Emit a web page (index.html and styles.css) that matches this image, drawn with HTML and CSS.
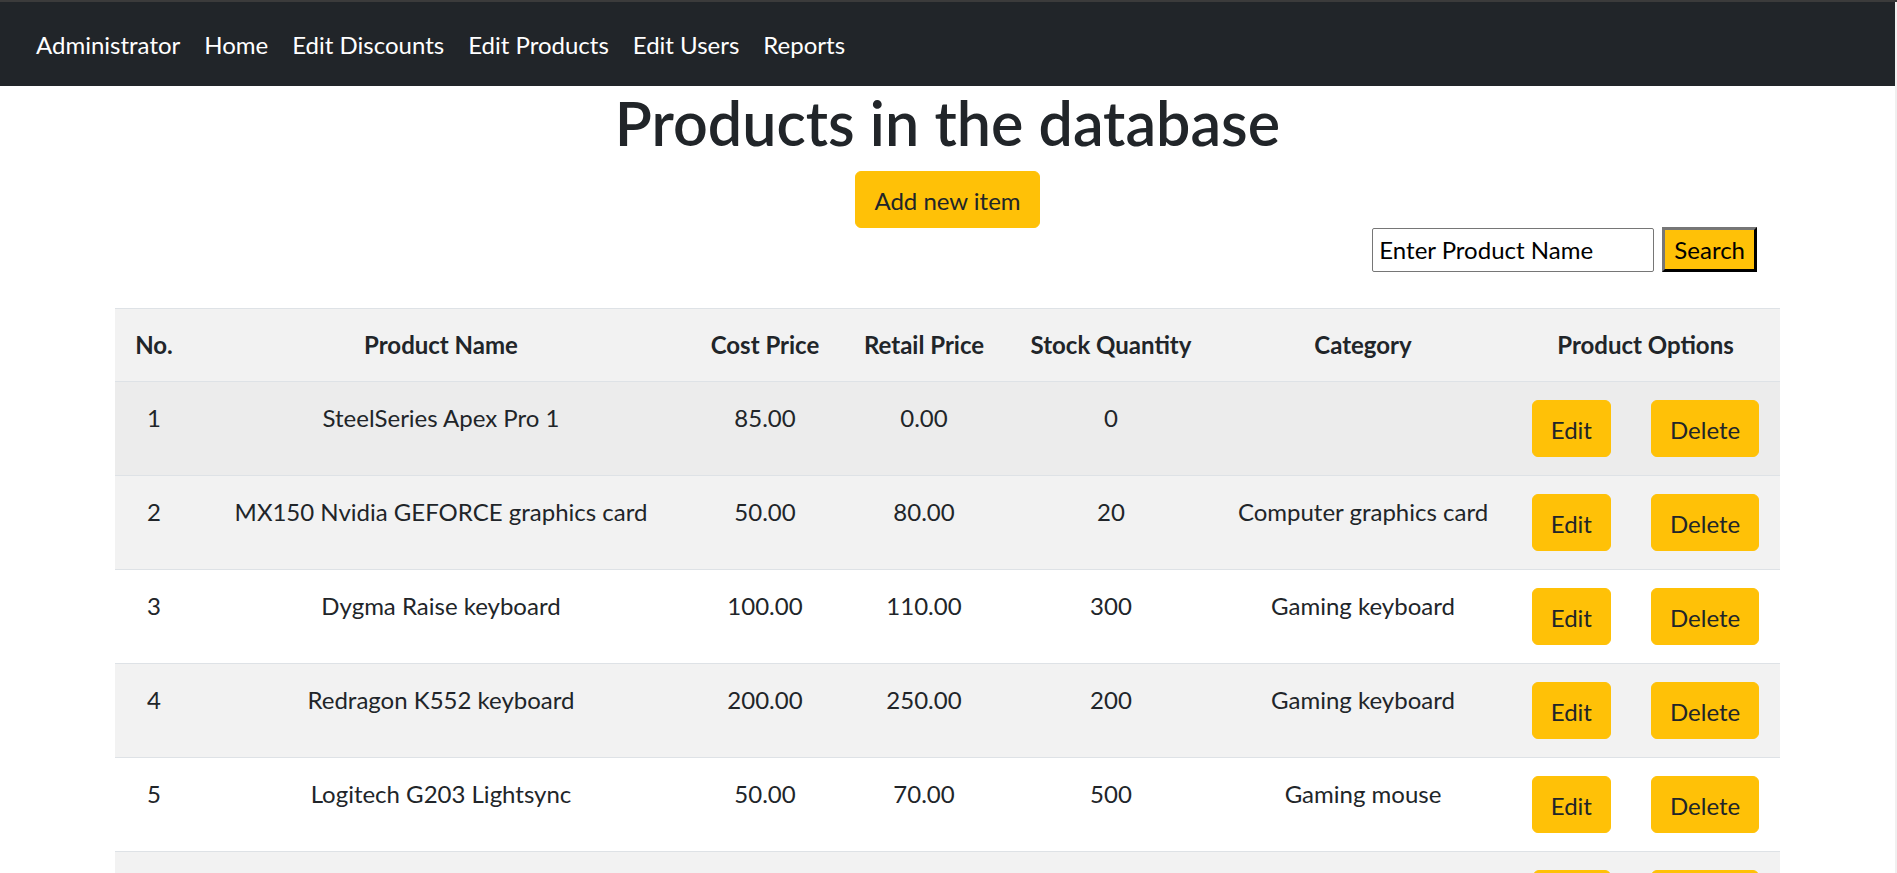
FILE: index.html
```html
<!DOCTYPE html>
<html lang="en">
<head>
<meta charset="utf-8">
<title>Products in the database</title>
<link rel="stylesheet" href="styles.css">
</head>
<body>
<nav class="navbar">
  <a class="nav-link" href="#">Administrator</a>
  <a class="nav-link" href="#">Home</a>
  <a class="nav-link" href="#">Edit Discounts</a>
  <a class="nav-link" href="#">Edit Products</a>
  <a class="nav-link" href="#">Edit Users</a>
  <a class="nav-link" href="#">Reports</a>
</nav>
<main class="page">
  <h1 class="title">Products in the database</h1>
  <div class="add-wrap"><button class="btn">Add new item</button></div>
  <div class="container">
    <form class="search">
      <input class="search-input" type="text" value="Enter Product Name">
      <button class="search-btn" type="button">Search</button>
    </form>
    <table class="table">
      <colgroup>
        <col class="c1"><col class="c2"><col class="c3"><col class="c4"><col class="c5"><col class="c6"><col class="c7">
      </colgroup>
      <tr class="odd">
        <th>No.</th><th>Product Name</th><th>Cost Price</th><th>Retail Price</th><th>Stock Quantity</th><th>Category</th><th>Product Options</th>
      </tr>
      <tr class="hover">
        <td>1</td><td>SteelSeries Apex Pro 1</td><td>85.00</td><td>0.00</td><td>0</td><td></td>
        <td><div class="opts"><button class="btn">Edit</button><button class="btn">Delete</button></div></td>
      </tr>
      <tr class="odd">
        <td>2</td><td>MX150 Nvidia GEFORCE graphics card</td><td>50.00</td><td>80.00</td><td>20</td><td>Computer graphics card</td>
        <td><div class="opts"><button class="btn">Edit</button><button class="btn">Delete</button></div></td>
      </tr>
      <tr>
        <td>3</td><td>Dygma Raise keyboard</td><td>100.00</td><td>110.00</td><td>300</td><td>Gaming keyboard</td>
        <td><div class="opts"><button class="btn">Edit</button><button class="btn">Delete</button></div></td>
      </tr>
      <tr class="odd">
        <td>4</td><td>Redragon K552 keyboard</td><td>200.00</td><td>250.00</td><td>200</td><td>Gaming keyboard</td>
        <td><div class="opts"><button class="btn">Edit</button><button class="btn">Delete</button></div></td>
      </tr>
      <tr>
        <td>5</td><td>Logitech G203 Lightsync</td><td>50.00</td><td>70.00</td><td>500</td><td>Gaming mouse</td>
        <td><div class="opts"><button class="btn">Edit</button><button class="btn">Delete</button></div></td>
      </tr>
      <tr class="odd">
        <td></td><td></td><td></td><td></td><td></td><td></td>
        <td><div class="opts"><button class="btn btn-blank" aria-label="Edit"></button><button class="btn btn-blank wide" aria-label="Delete"></button></div></td>
      </tr>
    </table>
  </div>
</main>
</body>
</html>
```
FILE: styles.css
```css
html {
  background: #f0f0f0;
  border-top: 2px solid #3b3b3b;
}
body {
  margin: 0 2px 0 0;
  background: #ffffff;
  font-family: "Lato", "Noto Sans", sans-serif;
  font-size: 24px;
  line-height: 1.5;
  color: #212529;
}
.navbar {
  display: flex;
  background: #212529;
  padding: 12px 24px;
}
.nav-link {
  color: #ffffff;
  text-decoration: none;
  padding: 13px 12px 11px;
  line-height: 36px;
}
.page {
  padding-bottom: 40px;
}
.title {
  margin: 1px 0 12px;
  font-size: 61px;
  line-height: 72px;
  font-weight: 600;
  text-align: center;
}
.add-wrap {
  text-align: center;
}
.btn {
  height: 57px;
  box-sizing: border-box;
  font-family: inherit;
  font-size: 24px;
  line-height: 36px;
  color: #212529;
  background: #ffc107;
  border: 1.5px solid #ffc107;
  border-radius: 6px;
  padding: 2px 18px 0;
  cursor: pointer;
}
.btn-blank {
  width: 78px;
}
.btn-blank.wide {
  width: 108px;
}
.container {
  width: 1665px;
  margin: 0 auto;
}
.search {
  display: flex;
  justify-content: flex-end;
  align-items: center;
  gap: 8px;
  padding-right: 23px;
  margin: -1px 0 36px;
}
.search-input {
  width: 282px;
  height: 44px;
  box-sizing: border-box;
  border: 1px solid #767676;
  border-radius: 2px;
  padding: 0 6px;
  font-family: inherit;
  font-size: 24px;
  color: #000000;
}
.search-btn {
  height: 45px;
  box-sizing: border-box;
  padding: 0 9px;
  font-family: inherit;
  font-size: 24px;
  color: #000000;
  background: #ffc107;
  border: 3px outset #767676;
  border-right-color: #222222;
  border-bottom-color: #222222;
}
.table {
  width: 1665px;
  table-layout: fixed;
  border-collapse: collapse;
}
.c1 { width: 78px; }
.c2 { width: 496px; }
.c3 { width: 152px; }
.c4 { width: 166px; }
.c5 { width: 208px; }
.c6 { width: 296px; }
.c7 { width: 269px; }
.table th,
.table td {
  padding: 18px;
  border-top: 1px solid #dee2e6;
  text-align: center;
  vertical-align: top;
  line-height: 36px;
}
.table th {
  font-weight: 700;
}
.table tr.odd {
  background: #f2f2f2;
}
.table tr.hover {
  background: #ececec;
}
.opts {
  display: flex;
  justify-content: center;
  gap: 40px;
}
```
